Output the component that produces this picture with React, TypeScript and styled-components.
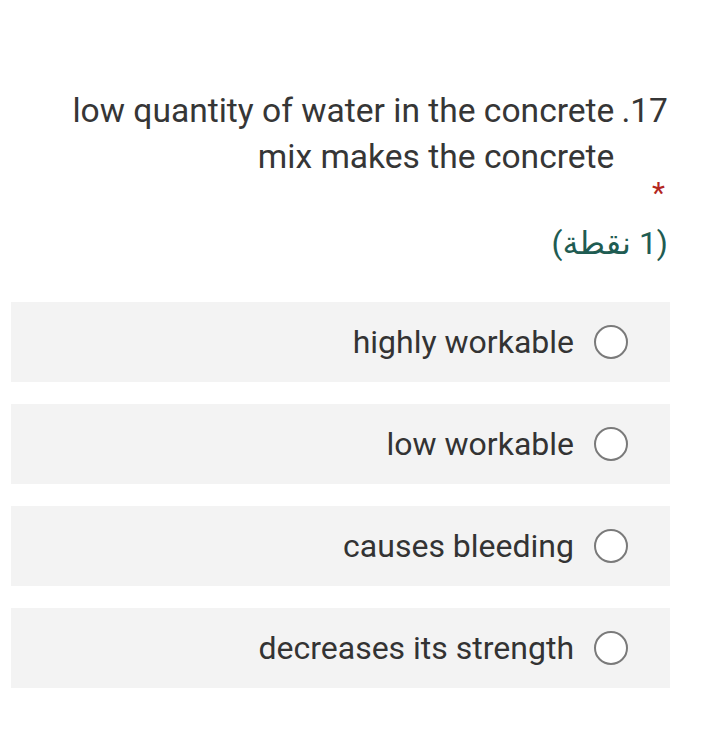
import React from "react";
import styled, { createGlobalStyle } from "styled-components";

const Global = createGlobalStyle`
  html, body { margin: 0; padding: 0; background: #ffffff; }
  body { font-family: Roboto, "Noto Sans", "DejaVu Sans", sans-serif; }
`;

const Page = styled.div`
  direction: rtl;
  width: 701px;
  min-height: 753px;
  box-sizing: border-box;
  padding: 88px 31px 0 11px;
  display: flex;
  flex-direction: column;
`;

const Header = styled.div`
  padding: 0 2px 0 50px;
  display: flex;
  flex-direction: column;
  align-items: stretch;
`;

const Question = styled.div`
  display: flex;
  gap: 7px;
  font-size: 33.6px;
  line-height: 46px;
  color: #363636;
`;

const QNumber = styled.span`
  flex: none;
`;

const QText = styled.span`
  flex: 1;
  text-align: right;
`;

const Star = styled.div`
  color: #b3261e;
  font-size: 30px;
  line-height: 26px;
  margin-top: 0;
  padding-right: 3px;
`;

const Points = styled.div`
  color: #1f5c52;
  font-size: 32px;
  line-height: 36px;
  margin-top: 19px;
`;

const Options = styled.div`
  margin-top: 41px;
  display: flex;
  flex-direction: column;
  gap: 22px;
`;

const Option = styled.label`
  height: 80px;
  background: #f3f3f3;
  display: flex;
  align-items: center;
  padding-right: 42px;
  gap: 20px;
`;

const Radio = styled.span`
  box-sizing: border-box;
  width: 34px;
  height: 34px;
  border-radius: 50%;
  border: 2px solid #7a7a7a;
  background: #ffffff;
  flex: none;
`;

const OptionText = styled.span`
  font-size: 32px;
  color: #333333;
`;

const options = [
  "highly workable",
  "low workable",
  "causes bleeding",
  "decreases its strength",
];

export default function App() {
  return (
    <>
      <Global />
      <Page>
        <Header>
          <Question>
            <QNumber>17.</QNumber>
            <QText>low quantity of water in the concrete mix makes the concrete</QText>
          </Question>
          <Star>*</Star>
          <Points>(1 نقطة)</Points>
        </Header>
        <Options>
          {options.map((o) => (
            <Option key={o}>
              <Radio />
              <OptionText>{o}</OptionText>
            </Option>
          ))}
        </Options>
      </Page>
    </>
  );
}
